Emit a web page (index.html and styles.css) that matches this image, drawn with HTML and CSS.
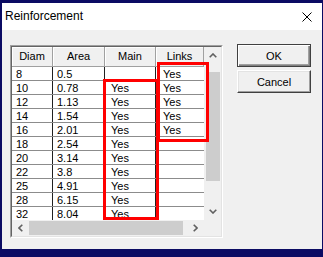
FILE: index.html
```html
<!DOCTYPE html>
<html>
<head>
<meta charset="utf-8">
<link rel="stylesheet" href="styles.css">
</head>
<body>
<div class="window">
  <div class="titlebar">
    <span class="title">Reinforcement</span>
    <svg class="close" width="10" height="10" viewBox="0 0 10 10"><path d="M0.5 0.5 L9.5 9.5 M9.5 0.5 L0.5 9.5" stroke="#000" stroke-width="1" fill="none"/></svg>
  </div>
  <div class="content">
    <div class="grid">
      <div class="frame">
        <div class="cells">
          <div class="row head"><div class="c c1">Diam</div><div class="c c2">Area</div><div class="c c3">Main</div><div class="c c4">Links</div></div>
          <div class="row"><div class="c c1">8</div><div class="c c2">0.5</div><div class="c c3"></div><div class="c c4">Yes</div></div>
          <div class="row"><div class="c c1">10</div><div class="c c2">0.78</div><div class="c c3">Yes</div><div class="c c4">Yes</div></div>
          <div class="row"><div class="c c1">12</div><div class="c c2">1.13</div><div class="c c3">Yes</div><div class="c c4">Yes</div></div>
          <div class="row"><div class="c c1">14</div><div class="c c2">1.54</div><div class="c c3">Yes</div><div class="c c4">Yes</div></div>
          <div class="row"><div class="c c1">16</div><div class="c c2">2.01</div><div class="c c3">Yes</div><div class="c c4">Yes</div></div>
          <div class="row"><div class="c c1">18</div><div class="c c2">2.54</div><div class="c c3">Yes</div><div class="c c4"></div></div>
          <div class="row"><div class="c c1">20</div><div class="c c2">3.14</div><div class="c c3">Yes</div><div class="c c4"></div></div>
          <div class="row"><div class="c c1">22</div><div class="c c2">3.8</div><div class="c c3">Yes</div><div class="c c4"></div></div>
          <div class="row"><div class="c c1">25</div><div class="c c2">4.91</div><div class="c c3">Yes</div><div class="c c4"></div></div>
          <div class="row"><div class="c c1">28</div><div class="c c2">6.15</div><div class="c c3">Yes</div><div class="c c4"></div></div>
          <div class="row"><div class="c c1">32</div><div class="c c2">8.04</div><div class="c c3">Yes</div><div class="c c4"></div></div>
        </div>
        <div class="vscroll">
          <div class="sbtn"><svg width="8" height="5" viewBox="0 0 8 5"><polyline points="0.7,4.3 4,1 7.3,4.3" stroke="#606060" stroke-width="1.6" fill="none"/></svg></div>
          <div class="vtrack"><div class="vthumb"></div></div>
          <div class="sbtn"><svg width="8" height="5" viewBox="0 0 8 5"><polyline points="0.7,0.7 4,4 7.3,0.7" stroke="#606060" stroke-width="1.6" fill="none"/></svg></div>
        </div>
        <div class="hscroll">
          <div class="sbtn"><svg width="5" height="8" viewBox="0 0 5 8"><polyline points="4.3,0.7 1,4 4.3,7.3" stroke="#606060" stroke-width="1.6" fill="none"/></svg></div>
          <div class="htrack"><div class="hthumb"></div></div>
          <div class="sbtn"><svg width="5" height="8" viewBox="0 0 5 8"><polyline points="0.7,0.7 4,4 0.7,7.3" stroke="#606060" stroke-width="1.6" fill="none"/></svg></div>
        </div>
        <div class="corner"></div>
        <div class="mark mark-main"></div>
        <div class="mark mark-links"></div>
      </div>
    </div>
    <div class="buttons">
      <button class="btn default">OK</button>
      <button class="btn">Cancel</button>
    </div>
  </div>
</div>
</body>
</html>
```
FILE: styles.css
```css
html, body {
  margin: 0;
  padding: 0;
}
body {
  width: 323px;
  height: 257px;
  overflow: hidden;
  background: #0b0b63;
  font-family: "Liberation Sans", Arial, sans-serif;
  color: #000;
}
.window {
  margin: 3px 1px 0 2px;
  width: 320px;
  height: 246px;
  background: #f0f0f0;
  display: flex;
  flex-direction: column;
}
.titlebar {
  height: 27px;
  background: #fff;
  display: flex;
  align-items: center;
  justify-content: space-between;
  padding: 0 10px 0 3px;
}
.title {
  font-size: 12px;
  line-height: 27px;
}
.close {
  display: block;
  margin-top: 1px;
}
.content {
  display: flex;
  align-items: flex-start;
  padding: 14px 0 0 8px;
}
.grid {
  margin-top: 1px;
  border: 1px solid;
  border-color: #a0a0a0 #fff #fff #a0a0a0;
}
.frame {
  position: relative;
  border: 1px solid;
  border-color: #646464 #e3e3e3 #e3e3e3 #646464;
  display: grid;
  grid-template-columns: 192px 17px;
  grid-template-rows: 173px 16px;
}
.cells {
  background: #fff;
  overflow: hidden;
}
.row {
  display: flex;
  height: 13px;
  border-bottom: 1px solid #8c8c8c;
  font-size: 11px;
  line-height: 15px;
}
.c {
  box-sizing: border-box;
  border-right: 1px solid #202020;
  white-space: nowrap;
}
.c1 { width: 41px; padding-left: 4px; }
.c2 { width: 52px; padding-left: 4px; }
.c3 { width: 51px; padding-left: 6px; }
.c4 { width: 48px; padding-left: 7px; border-right: 0; }
.row.head {
  height: 19px;
  line-height: 19px;
  background: #f0f0f0;
  border-bottom: 1px solid #a0a0a0;
}
.row.head .c {
  padding-left: 0;
  text-align: center;
  border-right: 1px solid #a0a0a0;
  box-shadow: inset 1px 1px #fff;
}
.vscroll {
  grid-row: 1 / 3;
  grid-column: 2;
  display: flex;
  flex-direction: column;
  background: #f0f0f0;
  height: 173px;
}
.sbtn {
  flex: none;
  width: 17px;
  height: 17px;
  display: flex;
  align-items: center;
  justify-content: center;
}
.vtrack {
  flex: 1;
}
.vthumb {
  margin: 8px 1px 0 2px;
  height: 109px;
  background: #cdcdcd;
}
.hscroll {
  grid-row: 2;
  grid-column: 1;
  display: flex;
  background: #f0f0f0;
  height: 16px;
}
.hscroll .sbtn {
  height: 16px;
}
.htrack {
  flex: 1;
}
.hthumb {
  margin-top: 1px;
  width: 154px;
  height: 14px;
  background: #cdcdcd;
}
.corner {
  grid-row: 2;
  grid-column: 2;
  background: #f0f0f0;
}
.mark {
  position: absolute;
  box-sizing: border-box;
  border: 3px solid #f00;
}
.mark-main {
  left: 91px;
  top: 32px;
  width: 56px;
  height: 141px;
}
.mark-links {
  left: 145px;
  top: 15px;
  width: 52px;
  height: 80px;
}
.buttons {
  margin-left: 14px;
  display: flex;
  flex-direction: column;
  gap: 3px;
}
.btn {
  box-sizing: border-box;
  width: 74px;
  height: 23px;
  padding: 0;
  margin: 0;
  font-family: "Liberation Sans", Arial, sans-serif;
  font-size: 11px;
  color: #000;
  background: #f0f0f0;
  border: 1px solid;
  border-color: #fff #404040 #404040 #fff;
  box-shadow: inset -1px -1px #a0a0a0, inset 1px 1px #e3e3e3;
}
.btn.default {
  border-color: #404040;
  box-shadow: inset 1px 1px #fff, inset -1px -1px #808080, inset -2px -2px #a0a0a0;
}
```
